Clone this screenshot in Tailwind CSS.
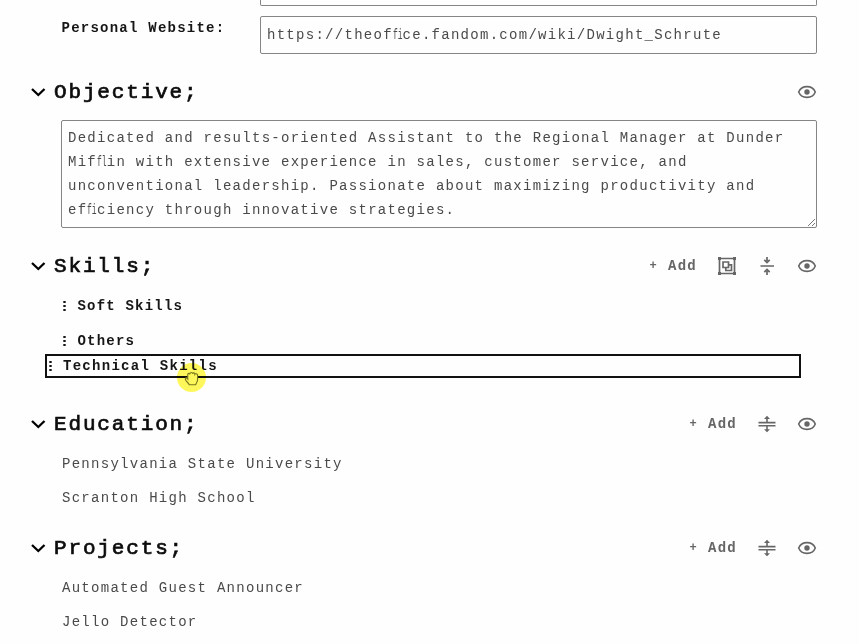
<!DOCTYPE html>
<html lang="en">
<head>
<meta charset="utf-8">
<title>Resume editor</title>
<script src="https://cdn.jsdelivr.net/npm/@tailwindcss/browser@4"></script>
</head>
<body class="bg-[#fefefe] h-[644px] overflow-hidden font-['Liberation_Mono',monospace] text-[14px] leading-6 tracking-[1.28px] text-[#4a4a4a]">
<svg class="hidden">
  <symbol id="eye" viewBox="0 0 20 20"><path d="M1.700 10C3.200 6.300 6.200 4.600 10 4.600s6.800 1.700 8.300 5.400c-1.500 3.700-4.500 5.400-8.300 5.400S3.200 13.700 1.700 10Z" fill="none" stroke="currentColor" stroke-width="1.600"/><circle cx="10" cy="10" r="2.700" fill="currentColor"/></symbol>
  <symbol id="chev" viewBox="0 0 16 10"><path d="M2 2 8.300 8l6.200-6" fill="none" stroke="currentColor" stroke-width="2.300"/></symbol>
  <symbol id="expand" viewBox="0 0 20 20"><path d="M1.500 8.600h17M1.500 11.800h17M10 8V4M10 12.500V16" fill="none" stroke="currentColor" stroke-width="1.600"/><path d="M10 1.800 13 5H7ZM10 18.300 13 15.200H7Z" fill="currentColor"/></symbol>
  <symbol id="collapse" viewBox="0 0 20 20"><path d="M3.500 10h13.500M10 1v4M10 19v-4M7.300 3.900 10 6.500l2.700-2.600M7.300 16.100 10 13.500l2.700 2.600" fill="none" stroke="currentColor" stroke-width="1.700"/></symbol>
  <symbol id="group" viewBox="0 0 20 20"><path d="M2.500 2.500h15v15h-15ZM6 6h5.500v5.500H6ZM11.500 8.800h3v5.700H8.800v-3" fill="none" stroke="currentColor" stroke-width="1.700"/><path d="M1 1h3v3H1ZM16 1h3v3h-3ZM1 16h3v3H1ZM16 16h3v3h-3Z" fill="currentColor"/></symbol>
  <symbol id="grip" viewBox="0 0 3 12"><path d="M.3 1h2.400v2H.3ZM.3 5h2.400v2H.3ZM.3 9h2.400v2H.3Z" fill="currentColor"/></symbol>
</svg>
<main class="relative w-[817px] pl-[30px]">
  <div class="ml-[230px] h-[6px] border border-t-0 border-[#858585] rounded-b-[2px]"></div>
  <div class="mt-[10px] flex h-[38px] pl-[31.500px]">
    <label class="w-[198.500px] shrink-0 font-bold text-[#161616] tracking-[1.240px]">Personal Website:</label>
    <div class="flex-1 border border-[#858585] rounded-[2px] pl-[6px] pt-[6px] whitespace-nowrap">https://theof<span class="inline-block w-[9.680px] scale-x-[0.570] origin-left tracking-normal">fi</span>ce.fandom.com/wiki/Dwight_Schrute</div>
  </div>

  <section class="mt-[26px]">
    <header class="flex items-center h-6">
      <svg class="w-4 h-[10px] text-black mr-[8px]"><use href="#chev"/></svg>
      <h2 class="mt-0.5 [-webkit-text-stroke:0.7px_#0c0c0c] text-[21px] leading-6 tracking-[1.850px] text-[#0c0c0c]">Objective;</h2>
      <svg class="ml-auto size-5 text-[#666]"><use href="#eye"/></svg>
    </header>
    <div class="relative mt-4 ml-[31px] h-[108px] border border-[#858585] rounded-[2px] pl-[6px] pt-[5px] whitespace-nowrap">Dedicated and results-oriented Assistant to the Regional Manager at Dunder<br>Mif<span class="inline-block w-[9.680px] scale-x-[0.570] origin-left tracking-normal">fl</span>in with extensive experience in sales, customer service, and<br>unconventional leadership. Passionate about maximizing productivity and<br>ef<span class="inline-block w-[9.680px] scale-x-[0.570] origin-left tracking-normal">fi</span>ciency through innovative strategies.
      <svg class="absolute right-0 bottom-0 size-[9px]" viewBox="0 0 9 9"><path d="M1 8 8 1M5 8 8 5" stroke="#777" fill="none"/></svg>
    </div>
  </section>

  <section class="mt-[26px] h-[132px]">
    <header class="flex items-center h-6">
      <svg class="w-4 h-[10px] text-black mr-[8px]"><use href="#chev"/></svg>
      <h2 class="mt-0.5 [-webkit-text-stroke:0.7px_#0c0c0c] text-[21px] leading-6 tracking-[1.850px] text-[#0c0c0c]">Skills;</h2>
      <div class="ml-auto flex items-center gap-5 text-[#666]">
        <span class="font-bold flex gap-[9.500px]"><span class="text-[12px] w-[9px]">+</span><span>Add</span></span>
        <svg class="size-5"><use href="#group"/></svg>
        <svg class="size-5"><use href="#collapse"/></svg>
        <svg class="size-5"><use href="#eye"/></svg>
      </div>
    </header>
    <ul class="mt-4 ml-[33px] flex flex-col gap-[11px] font-bold text-[#161616] tracking-[1.200px]">
      <li class="flex items-center gap-[11.500px]"><svg class="w-[3px] h-3"><use href="#grip"/></svg>Soft Skills</li>
      <li class="flex items-center gap-[11.500px]"><svg class="w-[3px] h-3"><use href="#grip"/></svg>Others</li>
    </ul>
  </section>

  <section class="mt-[26px]">
    <header class="flex items-center h-6">
      <svg class="w-4 h-[10px] text-black mr-[8px]"><use href="#chev"/></svg>
      <h2 class="mt-0.5 [-webkit-text-stroke:0.7px_#0c0c0c] text-[21px] leading-6 tracking-[1.850px] text-[#0c0c0c]">Education;</h2>
      <div class="ml-auto flex items-center gap-5 text-[#666]">
        <span class="font-bold flex gap-[9.500px]"><span class="text-[12px] w-[9px]">+</span><span>Add</span></span>
        <svg class="size-5"><use href="#expand"/></svg>
        <svg class="size-5"><use href="#eye"/></svg>
      </div>
    </header>
    <ul class="mt-4 ml-[32px] flex flex-col gap-[10px]"><li>Pennsylvania State University</li><li>Scranton High School</li></ul>
  </section>

  <section class="mt-[26px]">
    <header class="flex items-center h-6">
      <svg class="w-4 h-[10px] text-black mr-[8px]"><use href="#chev"/></svg>
      <h2 class="mt-0.5 [-webkit-text-stroke:0.7px_#0c0c0c] text-[21px] leading-6 tracking-[1.850px] text-[#0c0c0c]">Projects;</h2>
      <div class="ml-auto flex items-center gap-5 text-[#666]">
        <span class="font-bold flex gap-[9.500px]"><span class="text-[12px] w-[9px]">+</span><span>Add</span></span>
        <svg class="size-5"><use href="#expand"/></svg>
        <svg class="size-5"><use href="#eye"/></svg>
      </div>
    </header>
    <ul class="mt-4 ml-[32px] flex flex-col gap-[10px]"><li>Automated Guest Announcer</li><li>Jello Detector</li></ul>
  </section>

  <!-- Item being dragged, with the grab cursor -->
  <div class="absolute left-[45px] top-[354px] w-[756px] h-6 border-2 border-[#111] bg-[#fefefe] flex items-center pl-[2px] gap-[11px] font-bold text-[#161616]"><svg class="w-[3px] h-3"><use href="#grip"/></svg>Technical Skills</div>
  <div class="absolute left-[177px] top-[363px] size-[29px] rounded-full bg-[#fff84a] mix-blend-multiply opacity-90"></div>
  <svg class="absolute left-[184px] top-[371px] w-[15px] h-[15px]" viewBox="0 0 16 16"><path d="M4 7V4c0-1.800 2-1.800 2.300-.5C6.300 1 9 1 9.200 3c.3-1.600 2.500-1.300 2.500.5.600-1 2.800-.6 2.800 1V9c0 3-1.700 3.500-2 5.700h-7C5.200 12.500 2 11.500 1.500 9 1 7.300 2.800 6.500 4 8.500Z" fill="#fdf75a" stroke="#77771c" stroke-width="1.200"/></svg>
</main>
</body>
</html>
